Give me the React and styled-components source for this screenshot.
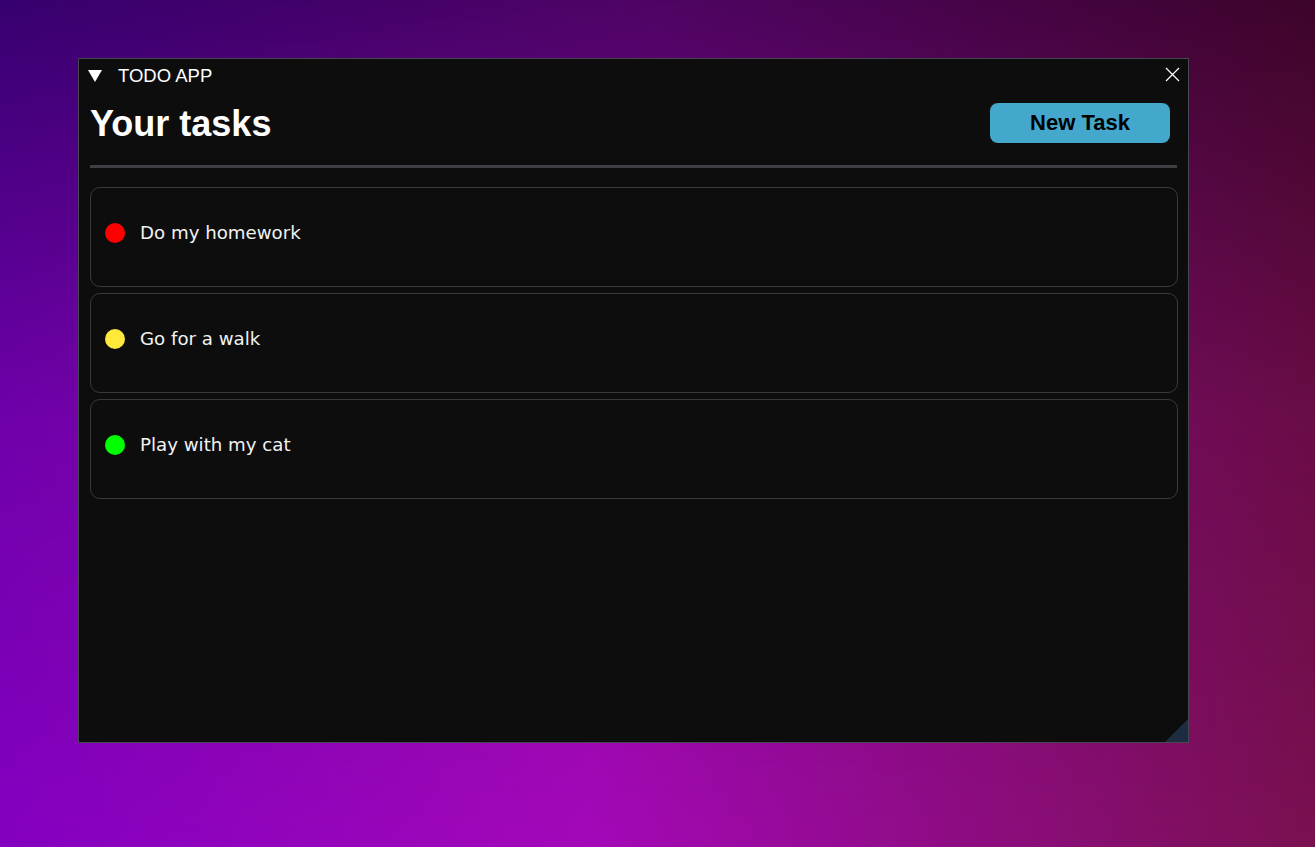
import React from "react";
import styled, { createGlobalStyle } from "styled-components";

const GlobalStyle = createGlobalStyle`
  html, body {
    margin: 0;
    padding: 0;
  }
  body {
    font-family: "Liberation Sans", Arial, sans-serif;
  }
`;

const tasks = [
  { id: 1, title: "Do my homework", color: "#ff0000" },
  { id: 2, title: "Go for a walk", color: "#ffe93a" },
  { id: 3, title: "Play with my cat", color: "#00ff00" },
];

export default function App() {
  return (
    <>
      <GlobalStyle />
      <Desktop>
        <Window>
          <TitleBar>
            <TitleLeft>
              <svg width="14" height="12" viewBox="0 0 14 12">
                <polygon points="0,0 14,0 7,12" fill="#ffffff" />
              </svg>
              <TitleText>TODO APP</TitleText>
            </TitleLeft>
            <CloseButton>
              <svg width="15" height="15" viewBox="0 0 15 15">
                <path d="M1 1 L14 14 M14 1 L1 14" stroke="#ffffff" strokeWidth="1.2" />
              </svg>
            </CloseButton>
          </TitleBar>
          <Body>
            <Header>
              <Heading>Your tasks</Heading>
              <NewTaskButton>New Task</NewTaskButton>
            </Header>
            <Separator />
            <TaskList>
              {tasks.map((task) => (
                <TaskCard key={task.id}>
                  <TaskRow>
                    <Dot color={task.color} />
                    <TaskTitle>{task.title}</TaskTitle>
                  </TaskRow>
                </TaskCard>
              ))}
            </TaskList>
          </Body>
          <ResizeGrip />
        </Window>
      </Desktop>
    </>
  );
}

const Desktop = styled.div`
  position: relative;
  width: 100vw;
  height: 100vh;
  overflow: hidden;
  box-sizing: border-box;
  padding: 58px 0 0 78px;
  background: linear-gradient(to right, #33006b 0%, #4a0460 50%, #3a0428 100%);
  isolation: isolate;

  &::before {
    content: "";
    position: absolute;
    inset: 0;
    z-index: -1;
    background: linear-gradient(to right, #8400c0 0%, #a408b8 45%, #7a1050 100%);
    -webkit-mask-image: linear-gradient(to bottom, rgba(0,0,0,0.05) 0%, rgba(0,0,0,0.75) 50%, #000 100%);
    mask-image: linear-gradient(to bottom, rgba(0,0,0,0.05) 0%, rgba(0,0,0,0.75) 50%, #000 100%);
  }
`;

const Window = styled.div`
  position: relative;
  width: 1111px;
  height: 685px;
  box-sizing: border-box;
  background: #0d0d0d;
  border: 1px solid rgba(120, 120, 140, 0.55);
  display: flex;
  flex-direction: column;
  overflow: hidden;
`;

const TitleBar = styled.div`
  height: 33px;
  display: flex;
  align-items: center;
  justify-content: space-between;
  padding: 0 8px 0 9px;
  flex-shrink: 0;
`;

const TitleLeft = styled.div`
  display: flex;
  align-items: center;
  gap: 16px;
`;

const TitleText = styled.span`
  color: #ffffff;
  font-family: "Liberation Sans", Arial, sans-serif;
  font-size: 18.5px;
  margin-top: 1px;
`;

const CloseButton = styled.div`
  display: flex;
  align-items: center;
  margin-top: -3px;
`;

const Body = styled.div`
  padding: 0 10px 0 11px;
  display: flex;
  flex-direction: column;
`;

const Header = styled.div`
  height: 62px;
  display: flex;
  align-items: center;
  justify-content: space-between;
`;

const Heading = styled.h1`
  margin: 2px 0 0;
  color: #ffffff;
  font-family: "Liberation Sans", Arial, sans-serif;
  font-weight: 700;
  font-size: 36px;
`;

const NewTaskButton = styled.button`
  width: 180px;
  height: 40px;
  margin-right: 8px;
  border: none;
  border-radius: 8px;
  background: #44a7cc;
  color: #000000;
  font-family: "Liberation Sans", Arial, sans-serif;
  font-weight: 700;
  font-size: 22px;
  cursor: pointer;
`;

const Separator = styled.div`
  margin-top: 11px;
  height: 3px;
  background: #404044;
  margin-right: 1px;
`;

const TaskList = styled.div`
  margin-top: 19px;
  display: flex;
  flex-direction: column;
  gap: 6px;
`;

const TaskCard = styled.div`
  height: 100px;
  box-sizing: border-box;
  border: 1px solid #3a3a3e;
  border-radius: 10px;
  padding: 33px 14px 0;
`;

const TaskRow = styled.div`
  display: flex;
  align-items: center;
  gap: 15px;
  height: 22px;
`;

const Dot = styled.span`
  width: 20px;
  height: 20px;
  border-radius: 50%;
  background: ${({ color }) => color};
  flex-shrink: 0;
  margin-top: 1px;
`;

const TaskTitle = styled.span`
  color: #f2f2f2;
  font-family: "DejaVu Sans", Verdana, sans-serif;
  font-size: 18.2px;
`;

const ResizeGrip = styled.div`
  position: absolute;
  right: 0;
  bottom: 0;
  width: 23px;
  height: 23px;
  background: #1d2c40;
  clip-path: polygon(100% 0, 100% 100%, 0 100%);
`;
